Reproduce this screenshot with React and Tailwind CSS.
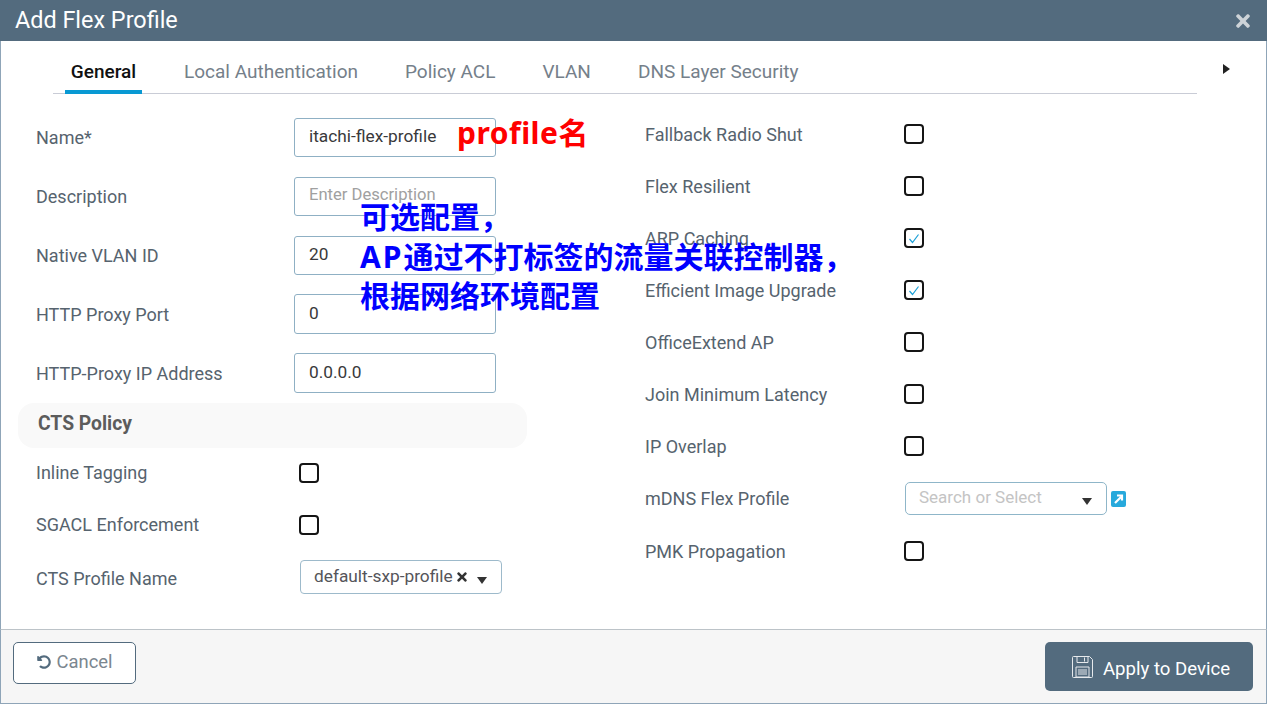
import { FaTimes, FaUndoAlt } from "react-icons/fa"

const leftFields = [
  { label: "Name*", value: "itachi-flex-profile" },
  { label: "Description", placeholder: "Enter Description" },
  { label: "Native VLAN ID", value: "20" },
  { label: "HTTP Proxy Port", value: "0", tall: true },
  { label: "HTTP-Proxy IP Address", value: "0.0.0.0", tall: true },
]

const tabs = ["Local Authentication", "Policy ACL", "VLAN", "DNS Layer Security"]

function Caret({ className = "" }) {
  return (
    <svg width="10" height="7" viewBox="0 0 10 7" className={className}>
      <path d="M0 0h10L5 7z" fill="#333" />
    </svg>
  )
}

function Check({ checked }) {
  return (
    <span className="flex h-[20px] w-[20px] items-center justify-center rounded-[4px] border-2 border-[#151515] bg-white">
      {checked && (
        <svg width="12" height="11" viewBox="0 0 12 11" fill="none">
          <path d="M1.5 6l3 3.5L10.5 1.5" stroke="#1ba0d7" strokeWidth="1.2" />
        </svg>
      )}
    </span>
  )
}

function FieldRow({ label, value, placeholder, tall }) {
  return (
    <div className="flex h-[59px] items-start">
      <label className="mt-[8px] w-[258px] text-[18px] leading-[24px] text-[#56636e]">{label}</label>
      <div className={tall
        ? "-mt-px flex h-[40px] w-[202px] items-center rounded-[3px] border border-[#8fb0c4] px-[14px] text-[17.3px]"
        : "flex h-[39px] w-[202px] items-center rounded-[3px] border border-[#8fb0c4] px-[14px] pb-[2px] text-[17.3px]"}>
        {value ? <span className="text-[#39393b]">{value}</span> : <span className="text-[16.6px] text-[#a0a0a0]">{placeholder}</span>}
      </div>
    </div>
  )
}

function CheckRow({ label, checked }) {
  return (
    <div className="flex h-[52px] items-center">
      <span className="w-[259px] text-[18px] text-[#56636e]">{label}</span>
      <Check checked={checked} />
    </div>
  )
}

export default function App() {
  return (
    <div className="relative flex h-[704px] w-[1267px] flex-col overflow-hidden bg-white font-['Roboto','Noto_Sans_CJK_SC',sans-serif]">
      <header className="flex h-[41px] shrink-0 items-center justify-between bg-[#536b7e] pl-[15px] pr-[14px]">
        <h1 className="pt-[1px] text-[23.4px] text-white">Add Flex Profile</h1>
        <FaTimes className="text-[20px] text-[#cdd3d8]" />
      </header>

      <div className="flex min-h-0 flex-1 flex-col border-x border-[#8fa5b8]">
        <div className="relative ml-[52px] mr-[69px] flex h-[53px] items-stretch gap-[47px] border-b border-[#c9ccd6] pl-[12px]">
          <div className="relative -mb-px -mr-[5px] flex w-[77px] items-center justify-center border-b-4 border-[#0899d3] pt-[14px] text-[19px] font-medium text-[#111]">
            General
          </div>
          {tabs.map((t) => (
            <div key={t} className="flex items-center pt-[11px] text-[19px] text-[#75808a]">{t}</div>
          ))}
          <svg width="7" height="10" viewBox="0 0 7 10" className="absolute right-[-33px] top-[23px]">
            <path d="M0 0l7 5-7 5z" fill="#222" />
          </svg>
        </div>

        <div className="flex flex-1">
          <div className="w-[644px] shrink-0 pt-[24px]">
            <div className="pl-[35px]">
              {leftFields.map((f) => <FieldRow key={f.label} {...f} />)}
            </div>
            <div className="-mt-[10px] ml-[17px] flex h-[45px] w-[509px] items-center rounded-[16px] bg-[#f9f9f9] pb-[2px] pl-[20px] text-[19.3px] font-bold text-[#5c5c5c]">
              CTS Policy
            </div>
            <div className="-mt-[1px] pl-[35px]">
              <div className="flex h-[52px] items-center">
                <span className="w-[263px] pb-[2px] text-[18px] text-[#56636e]">Inline Tagging</span>
                <Check />
              </div>
              <div className="flex h-[52px] items-center">
                <span className="w-[263px] pb-[2px] text-[18px] text-[#56636e]">SGACL Enforcement</span>
                <Check />
              </div>
              <div className="mt-[9px] flex items-center">
                <span className="w-[264px] pt-[2px] text-[18px] text-[#56636e]">CTS Profile Name</span>
                <div className="relative flex h-[34px] w-[202px] items-center rounded-[4px] border border-[#9dbacb] pl-[13px] text-[17.3px] text-[#55555a]">
                  default-sxp-profile
                  <FaTimes className="ml-[2px] text-[14px] text-[#333]" />
                  <Caret className="absolute right-[14px] top-[16px]" />
                </div>
              </div>
            </div>
          </div>

          <div className="flex-1 pt-[14px]">
            <CheckRow label="Fallback Radio Shut" />
            <CheckRow label="Flex Resilient" />
            <CheckRow label="ARP Caching" checked />
            <CheckRow label="Efficient Image Upgrade" checked />
            <CheckRow label="OfficeExtend AP" />
            <CheckRow label="Join Minimum Latency" />
            <CheckRow label="IP Overlap" />
            <div className="flex h-[53px] items-center">
              <span className="w-[260px] text-[18px] text-[#56636e]">mDNS Flex Profile</span>
              <div className="relative flex h-[33px] w-[202px] items-center rounded-[5px] border border-[#8fb6c9] pb-[2px] pl-[13px] text-[17px] text-[#c4c4c4]">
                Search or Select
                <Caret className="absolute right-[14px] top-[15px]" />
              </div>
              <svg width="15" height="16" viewBox="0 0 15 16" className="ml-[4px]">
                <rect width="15" height="16" rx="2" fill="#27a9dc" />
                <path d="M4 12l6-6M6 4.5h5v5" stroke="#fff" strokeWidth="2.2" fill="none" />
              </svg>
            </div>
            <CheckRow label="PMK Propagation" />
          </div>
        </div>
      </div>

      <footer className="flex h-[75px] shrink-0 items-start justify-between border border-[#8fa5b8] border-t-[#bcc3c8] bg-[#f6f6f6] pl-[12px] pr-[13px] pt-[12px]">
        <button className="flex h-[42px] w-[123px] items-center justify-center gap-[6px] rounded-[5px] border border-[#536b7e] bg-white pb-[3px] text-[18.4px] text-[#7b868f]">
          <FaUndoAlt className="text-[14px] text-[#536b7e]" />
          Cancel
        </button>
        <button className="flex h-[49px] w-[208px] items-center justify-center gap-[10px] rounded-[5px] bg-[#536b7e] pl-[4px] text-[18.6px] text-white">
          <svg width="21" height="22" viewBox="0 0 21 22" fill="none" stroke="#e6e9ec" strokeWidth="1">
            <path d="M1.5.5h16l3 3v17a1 1 0 01-1 1h-18a1 1 0 01-1-1v-19a1 1 0 011-1z" />
            <path d="M5 .5v6h11v-6M12.5 1.5v4" />
            <path d="M4 11h13v10H4zM6 14h9M6 16h9M6 18h9" />
          </svg>
          <span className="pt-[7px]">Apply to Device</span>
        </button>
      </footer>

      <div className="absolute left-[457px] top-[113px] font-['Noto_Sans','Noto_Sans_CJK_SC',sans-serif] text-[30px] font-bold leading-[40px] tracking-[0.5px] text-[#ff0000]">profile名</div>
      <div className="absolute left-[360px] top-[197px] font-['Noto_Sans','Noto_Sans_CJK_SC',sans-serif] text-[30px] font-bold leading-[39.6px] text-[#0000ff]">
        <div>可选配置，</div>
        <div><span className="tracking-[2px]">AP</span>通过不打标签的流量关联控制器，</div>
        <div>根据网络环境配置</div>
      </div>
    </div>
  )
}
